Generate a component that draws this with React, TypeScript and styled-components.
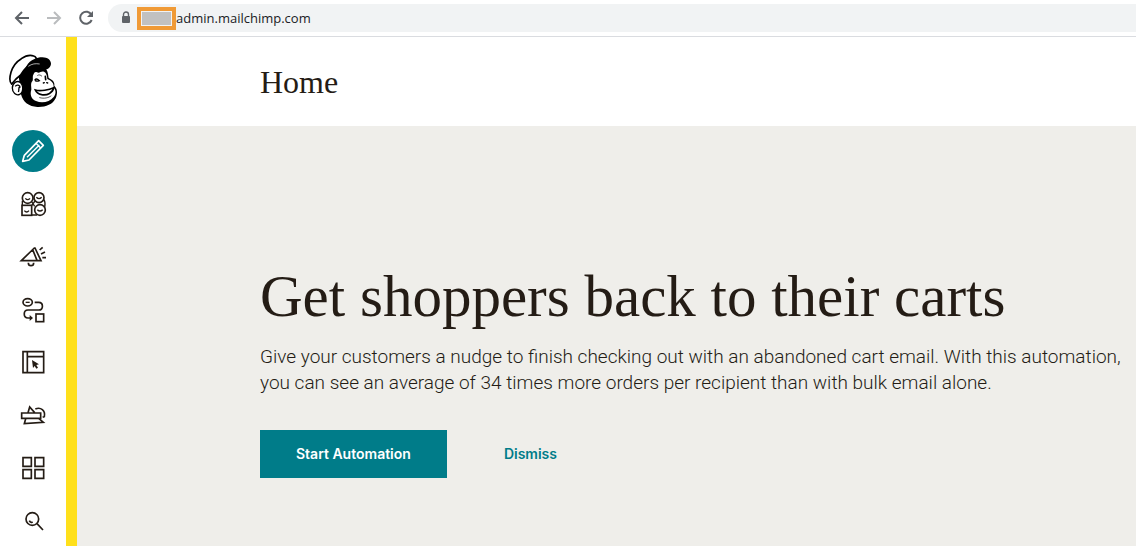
import React from "react";
import styled, { createGlobalStyle } from "styled-components";

const teal = "#007c89";
const ink = "#241c15";

const GlobalStyle = createGlobalStyle`
  * { box-sizing: border-box; }
  body {
    margin: 0;
    background: #ffffff;
    color: ${ink};
    font-family: Inter, "Liberation Sans", sans-serif;
  }
`;

const Page = styled.div`
  display: flex;
  flex-direction: column;
  min-height: 100vh;
`;

const BrowserBar = styled.header`
  display: flex;
  align-items: center;
  height: 37px;
  padding-left: 12px;
  border-bottom: 1px solid #dadce0;
  overflow: hidden;
`;

const BrowserButton = styled.button`
  display: flex;
  width: 20px;
  height: 20px;
  margin-right: 12px;
  padding: 0;
  border: 0;
  background: none;
`;

const AddressBar = styled.div`
  display: flex;
  flex: 1;
  align-items: center;
  height: 28px;
  padding-left: 12px;
  border-radius: 14px 0 0 14px;
  background: #f1f3f4;
`;

const LockSlot = styled.span`
  display: flex;
  width: 17px;
`;

const Redacted = styled.span`
  width: 39px;
  height: 23px;
  padding: 0;
  border: 4px solid #f09a36;
  background: #c1c1c1;
  box-shadow: inset 0 0 0 1px #f1f3f4;
`;

const Url = styled.span`
  color: #202124;
  font-family: "Open Sans", "Noto Sans", sans-serif;
  font-size: 13px;
  line-height: 20px;
`;

const Shell = styled.div`
  display: flex;
  flex: 1;
`;

const Sidebar = styled.nav`
  display: flex;
  flex: none;
  flex-direction: column;
  align-items: center;
  width: 77px;
  padding-top: 17px;
  border-right: 11px solid #ffe01b;
  background: #ffffff;
`;

const LogoLink = styled.a`
  display: flex;
  margin-bottom: 22px;
`;

const NavList = styled.div`
  display: flex;
  flex-direction: column;
  gap: 11px;
`;

const NavLink = styled.a<{ $active?: boolean }>`
  display: flex;
  width: 42px;
  height: 42px;
  border-radius: 50%;
  background: ${(p) => (p.$active ? teal : "transparent")};
  color: ${(p) => (p.$active ? "#ffffff" : ink)};
`;

const Main = styled.main`
  display: flex;
  flex: 1;
  flex-direction: column;
  min-width: 0;
`;

const TitleBar = styled.div`
  display: flex;
  align-items: center;
  height: 89px;
  padding-left: 183px;
`;

const Title = styled.h1`
  margin: 0;
  font-family: "Liberation Serif", serif;
  font-size: 32px;
  font-weight: 400;
  line-height: 40px;
`;

const Hero = styled.section`
  flex: 1;
  padding: 136px 0 68px 183px;
  background: #efeeea;
`;

const Headline = styled.h2`
  margin: 0 0 14px;
  font-family: "Liberation Serif", serif;
  font-size: 59px;
  font-weight: 400;
  line-height: 68px;
`;

const Copy = styled.p`
  max-width: 876px;
  margin: 0 0 34px;
  font-family: Roboto, Inter, sans-serif;
  font-size: 19px;
  font-weight: 300;
  line-height: 26px;
`;

const Actions = styled.div`
  display: flex;
  align-items: center;
  gap: 21px;
`;

const Button = styled.button<{ $primary?: boolean }>`
  height: 48px;
  padding: 0 36px;
  border: 0;
  background: ${(p) => (p.$primary ? teal : "transparent")};
  color: ${(p) => (p.$primary ? "#ffffff" : teal)};
  font-family: Inter, "Liberation Sans", sans-serif;
  font-size: 14px;
  font-weight: 600;
  line-height: 24px;
`;

type IconProps = { top: number; children: React.ReactNode };

const NavIcon = ({ top, children }: IconProps) => (
  <svg
    width="42"
    height="42"
    viewBox={`36 ${top} 126 126`}
    fill="none"
    stroke="currentColor"
    strokeWidth="5"
    aria-hidden="true"
  >
    {children}
  </svg>
);

const Logo = () => (
  <svg width="50" height="54" viewBox="24 42 150 162" aria-hidden="true">
    <path
      d="M56 108 C60 88 74 77 94 77 L132 78 C143 90 144 101 146 114 C157 119 165 126 163 138 C172 145 174 160 167 175 C158 194 136 202 112 201 C87 200 69 187 63 163 Z"
      fill="#000"
    />
    <path
      d="M101 102 C96 109 100 116 98 122 C90 130 95 140 94 149 C89 164 94 177 108 183 C126 191 149 186 161 171 C168 162 169 151 161 143 C162 131 156 122 142 117 C141 106 139 98 132 95 C123 92 119 101 111 97 C106 94 103 97 101 102 Z"
      fill="#fff"
    />
    <path
      d="M35 132 C28 126 29 111 33 97 C38 80 49 65 64 56 C77 47 91 44 101 48 C107 50 111 55 107 60 C94 66 73 86 62 105 C55 110 45 119 35 132 Z"
      fill="#fff"
      stroke="#000"
      strokeWidth="5"
      strokeLinejoin="round"
    />
    <path
      d="M74 96 C78 70 96 56 120 52 C139 49 153 58 153 71 C152 83 141 91 132 87 C114 79 96 83 74 96 Z"
      fill="#000"
    />
    <path d="M85 79 C96 71 107 70 119 72" fill="none" stroke="#fff" strokeWidth="2" />
    <path
      d="M62 128 C51 119 37 129 37 144 C37 158 48 168 59 163 C66 160 69 151 68 141 C67 134 65 131 62 128 Z"
      fill="#fff"
      stroke="#000"
      strokeWidth="4"
    />
    <path d="M46 139 C50 132 60 136 60 141 C53 142 59 150 55 156" fill="none" stroke="#000" strokeWidth="4" />
    <g fill="none" stroke="#000" strokeLinecap="round">
      <path d="M105 119 C109 115 114 118 118 122 C113 124 109 124 106 122" strokeWidth="4" />
      <path d="M113 106 C117 103 122 105 125 108" strokeWidth="2" />
      <path d="M136 109 L137 119" strokeWidth="5" />
      <path d="M130 129 L133 128 M140 128 L143 129" strokeWidth="4" />
      <path d="M106 150 C121 155 148 149 161 143 C159 158 142 167 125 164 C116 162 109 158 106 150 Z" strokeWidth="5" />
      <path d="M119 173 C133 177 146 173 153 168" strokeWidth="2" />
    </g>
  </svg>
);

const NAV = [
  {
    label: "Create",
    active: true,
    icon: (
      <NavIcon top={30}>
        <g strokeWidth="5" strokeLinejoin="round">
          <path d="M68 124 L73 106 L116 62 L130 76 L87 120 Z" />
          <path d="M81 112 L118 75 M108 70 L122 84" strokeWidth="4" />
        </g>
      </NavIcon>
    ),
  },
  {
    label: "Audience",
    icon: (
      <NavIcon top={189}>
        <circle cx="83" cy="234" r="16" />
        <circle cx="117" cy="233" r="15" />
        <rect x="66" y="256" width="29" height="30" />
        <circle cx="120" cy="270" r="16" />
        <path d="M67 242 V256 M132 239 C136 246 136 253 134 262 M95 245 L104 259 M105 243 L95 257 M95 285 H111" strokeWidth="4" />
        <path d="M76 235 Q83 243 90 235 M109 232 Q117 240 125 232 M73 272 Q80 280 87 272 M112 269 Q120 277 128 269" strokeWidth="4" />
      </NavIcon>
    ),
  },
  {
    label: "Campaigns",
    icon: (
      <NavIcon top={18}>
        <path d="M64 92 L103 54 L105 54 L123 92 Z M98 59 L111 91" />
        <path d="M85 98 C85 110 101 110 101 98" />
        <path d="M119 60 L128 52 M123 72 L135 66 M127 83 H138" />
      </NavIcon>
    ),
  },
  {
    label: "Automations",
    icon: (
      <NavIcon top={177}>
        <ellipse cx="83" cy="217" rx="14" ry="11" />
        <path d="M77 217 H89" strokeWidth="4" />
        <path d="M104 217 H116 C131 217 131 240 116 240 H84 C69 240 69 264 84 264 H94" />
        <path d="M89 255 L99 264 L89 273 Z" fill="currentColor" stroke="none" />
        <rect x="108" y="252" width="23" height="23" />
      </NavIcon>
    ),
  },
  {
    label: "Website",
    icon: (
      <NavIcon top={21}>
        <path d="M69 50 H131 V113 H69 Z M82 50 V113 M82 65 H131" />
        <path d="M96 75 L117 88 L109 90 L114 98 L109 101 L104 93 L99 99 Z" fill="currentColor" stroke="none" />
      </NavIcon>
    ),
  },
  {
    label: "Content Studio",
    icon: (
      <NavIcon top={180}>
        <path d="M65 234 H122 V250 H65 Z M84 233 L89 216 L104 233" />
        <path d="M77 251 L73 266 L130 262 L117 251 M106 222 C122 215 137 226 133 245 L128 247" />
      </NavIcon>
    ),
  },
  {
    label: "Integrations",
    icon: (
      <NavIcon top={24}>
        <path d="M69 53 H94 V79 H69 Z M105 53 H131 V79 H105 Z M69 89 H94 V115 H69 Z M105 89 H131 V115 H105 Z" />
      </NavIcon>
    ),
  },
  {
    label: "Search",
    icon: (
      <NavIcon top={183}>
        <circle cx="97" cy="237" r="19" />
        <path d="M111 251 L129 270 M88 242 C90 247 95 248 98 246" />
      </NavIcon>
    ),
  },
];

export default function App() {
  return (
    <Page>
      <GlobalStyle />
      <BrowserBar>
        <BrowserButton aria-label="Back">
          <svg width="20" height="20" viewBox="0 0 20 20" fill="none" stroke="#5f6368" strokeWidth="2">
            <path d="M17 10 H4 M10 4 L4 10 L10 16" />
          </svg>
        </BrowserButton>
        <BrowserButton aria-label="Forward">
          <svg width="20" height="20" viewBox="0 0 20 20" fill="none" stroke="#babcbe" strokeWidth="2">
            <path d="M3 10 H16 M10 4 L16 10 L10 16" />
          </svg>
        </BrowserButton>
        <BrowserButton aria-label="Reload">
          <svg width="20" height="20" viewBox="0 0 20 20" fill="none" stroke="#5f6368" strokeWidth="2">
            <path d="M15.5 7 A6 6 0 1 0 15.7 12" />
            <path d="M17 3 V9 H11 Z" fill="#5f6368" stroke="none" />
          </svg>
        </BrowserButton>
        <AddressBar>
          <LockSlot>
            <svg width="12" height="14" viewBox="0 0 12 14" aria-hidden="true">
              <path d="M3.5 6 V3.5 A2.5 2.5 0 0 1 8.5 3.5 V6" fill="none" stroke="#5f6368" strokeWidth="1.4" />
              <rect x="2" y="5" width="8" height="7" rx="1" fill="#5f6368" />
            </svg>
          </LockSlot>
          <Redacted />
          <Url>admin.mailchimp.com</Url>
        </AddressBar>
      </BrowserBar>
      <Shell>
        <Sidebar aria-label="Main">
          <LogoLink href="#home" aria-label="Mailchimp">
            <Logo />
          </LogoLink>
          <NavList>
            {NAV.map((item) => (
              <NavLink key={item.label} href="#" aria-label={item.label} $active={item.active}>
                {item.icon}
              </NavLink>
            ))}
          </NavList>
        </Sidebar>
        <Main>
          <TitleBar>
            <Title>Home</Title>
          </TitleBar>
          <Hero>
            <Headline>Get shoppers back to their carts</Headline>
            <Copy>
              Give your customers a nudge to finish checking out with an abandoned cart email. With this automation, you
              can see an average of 34 times more orders per recipient than with bulk email alone.
            </Copy>
            <Actions>
              <Button $primary>Start Automation</Button>
              <Button>Dismiss</Button>
            </Actions>
          </Hero>
        </Main>
      </Shell>
    </Page>
  );
}
